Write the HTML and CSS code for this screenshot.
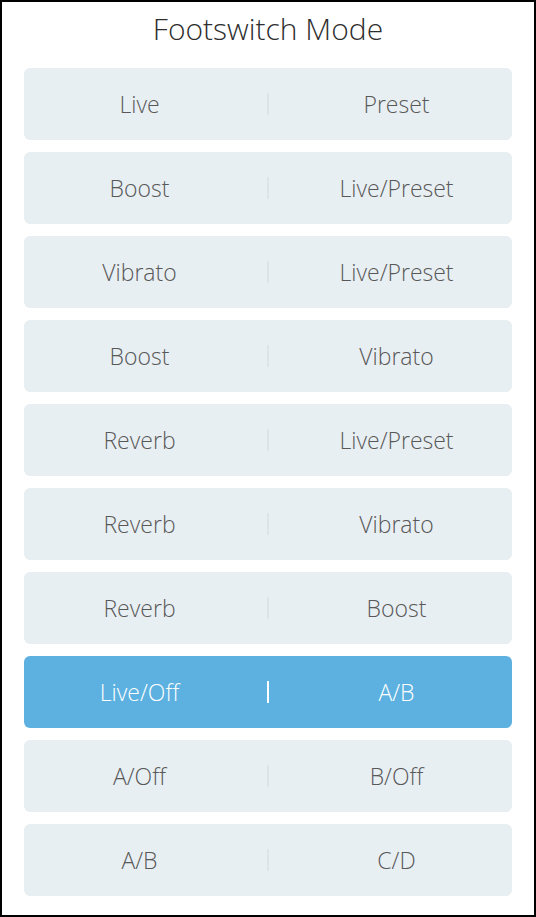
FILE: index.html
```html
<!DOCTYPE html>
<html>
<head>
<meta charset="utf-8">
<link rel="stylesheet" href="styles.css">
</head>
<body>
<div class="frame">
  <h1 class="title">Footswitch Mode</h1>
  <div class="list">
    <div class="row"><span class="cell left">Live</span><span class="divider"></span><span class="cell right">Preset</span></div>
    <div class="row"><span class="cell left">Boost</span><span class="divider"></span><span class="cell right">Live/Preset</span></div>
    <div class="row"><span class="cell left">Vibrato</span><span class="divider"></span><span class="cell right">Live/Preset</span></div>
    <div class="row"><span class="cell left">Boost</span><span class="divider"></span><span class="cell right">Vibrato</span></div>
    <div class="row"><span class="cell left">Reverb</span><span class="divider"></span><span class="cell right">Live/Preset</span></div>
    <div class="row"><span class="cell left">Reverb</span><span class="divider"></span><span class="cell right">Vibrato</span></div>
    <div class="row"><span class="cell left">Reverb</span><span class="divider"></span><span class="cell right">Boost</span></div>
    <div class="row selected"><span class="cell left">Live/Off</span><span class="divider"></span><span class="cell right">A/B</span></div>
    <div class="row"><span class="cell left">A/Off</span><span class="divider"></span><span class="cell right">B/Off</span></div>
    <div class="row"><span class="cell left">A/B</span><span class="divider"></span><span class="cell right">C/D</span></div>
  </div>
</div>
</body>
</html>
```
FILE: styles.css
```css
* { box-sizing: border-box; }
html, body { margin: 0; padding: 0; background: #fff; }
.frame {
  width: 536px;
  height: 917px;
  border: 2px solid #000;
  font-family: "Open Sans", "Noto Sans", sans-serif;
  font-weight: 300;
  padding: 0 22px;
  display: flex;
  flex-direction: column;
}
.title {
  margin: 0;
  height: 66px;
  display: flex;
  align-items: center;
  justify-content: center;
  font-size: 30px;
  font-weight: 300;
  color: #2e2e2e;
  padding-bottom: 14px;
}
.list {
  display: flex;
  flex-direction: column;
  gap: 12px;
}
.row {
  height: 72px;
  background: #e8eff3;
  border-radius: 6px;
  display: grid;
  grid-template-columns: 1fr 2px 1fr;
  align-items: center;
  color: #585858;
  font-size: 23px;
}
.cell { text-align: center; }
.left { padding-right: 12px; }
.right { padding-left: 12px; }
.divider {
  height: 22px;
  background: #dde4e9;
}
.selected {
  background: #5cb1e0;
  color: #fff;
}
.selected .divider { background: #fff; }
```
